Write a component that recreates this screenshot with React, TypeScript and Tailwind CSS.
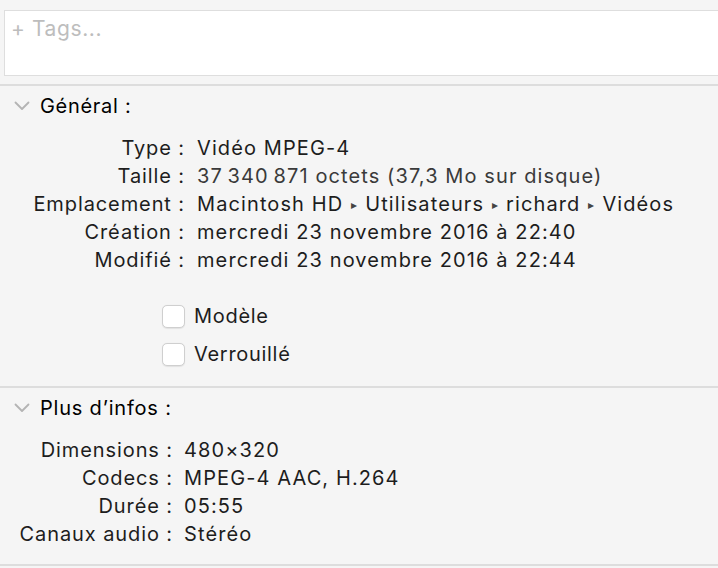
import React from "react";

const Chevron = () => (
  <svg width="16" height="10" viewBox="0 0 16 10" className="shrink-0">
    <polyline points="1.5,1.5 8,8 14.5,1.5" fill="none" stroke="#b4b4b4" strokeWidth="1.8" strokeLinecap="round" strokeLinejoin="round" />
  </svg>
);

const Tri = () => <span className="text-[12px] text-[#444] mx-[8px] relative top-[-2px] tracking-normal">▸</span>;

const Row = ({ label, value, w, gap }: { label: string; value: React.ReactNode; w: string; gap: string }) => (
  <div className="flex h-[28px] items-center">
    <div className={`${w} text-right shrink-0 whitespace-nowrap tracking-[0.9px]`}>{label}</div>
    <div className={`${gap} whitespace-nowrap tracking-[1.1px]`}>{value}</div>
  </div>
);

const Check = ({ label }: { label: string }) => (
  <div className="flex h-[38px] items-center pl-[162px]">
    <div className="w-[23px] h-[23px] rounded-[5px] border border-[#cfcfcf] bg-white shadow-[0_0.5px_1px_rgba(0,0,0,0.08)]" />
    <span className="ml-[9px] tracking-[0.7px]">{label}</span>
  </div>
);

export default function App() {
  return (
    <div
      className="w-[718px] h-[568px] bg-[#f5f5f5] overflow-hidden text-[20px] tracking-[0.6px] text-[#1d1d1d]"
      style={{ fontFamily: "Inter, 'Liberation Sans', sans-serif" }}
    >
      <div className="pt-[10px] pl-[4px]">
        <div className="h-[66px] border border-r-0 border-[#dedede] bg-white px-[6px] pt-[2px] text-[21px] text-[#bdbdbd]">
          + Tags...
        </div>
      </div>
      <div className="mt-[8px] h-[2px] bg-[#dddddd]" />
      <div className="flex h-[40px] items-center pl-[14px] gap-[10px] text-black">
        <Chevron />
        <span className="tracking-[0.7px]">Général :</span>
      </div>
      <div className="pt-[8px]">
        <Row w="w-[185px]" gap="ml-[12px]" label="Type :" value="Vidéo MPEG-4" />
        <Row w="w-[185px]" gap="ml-[12px]" label="Taille :" value={<span className="text-[#3a3a3a]">37{"\u202F"}340{"\u202F"}871 octets (37,3 Mo sur disque)</span>} />
        <Row
          w="w-[185px]"
          gap="ml-[12px]"
          label="Emplacement :"
          value={
            <span>
              Macintosh HD<Tri />Utilisateurs<Tri />richard<Tri />Vidéos
            </span>
          }
        />
        <Row w="w-[185px]" gap="ml-[12px]" label="Création :" value="mercredi 23 novembre 2016 à 22:40" />
        <Row w="w-[185px]" gap="ml-[12px]" label="Modifié :" value="mercredi 23 novembre 2016 à 22:44" />
      </div>
      <div className="mt-[23px]">
        <Check label="Modèle" />
        <Check label="Verrouillé" />
      </div>
      <div className="mt-[13px] h-[2px] bg-[#dddddd]" />
      <div className="flex h-[40px] items-center pl-[14px] gap-[10px] text-black">
        <Chevron />
        <span className="tracking-[0.8px]">Plus d’infos :</span>
      </div>
      <div className="pt-[8px]">
        <Row w="w-[173px]" gap="ml-[11px]" label="Dimensions :" value="480×320" />
        <Row w="w-[173px]" gap="ml-[11px]" label="Codecs :" value="MPEG-4 AAC, H.264" />
        <Row w="w-[173px]" gap="ml-[11px]" label="Durée :" value="05:55" />
        <Row w="w-[173px]" gap="ml-[11px]" label="Canaux audio :" value="Stéréo" />
      </div>
      <div className="mt-[16px] h-[2px] bg-[#dddddd]" />
    </div>
  );
}
